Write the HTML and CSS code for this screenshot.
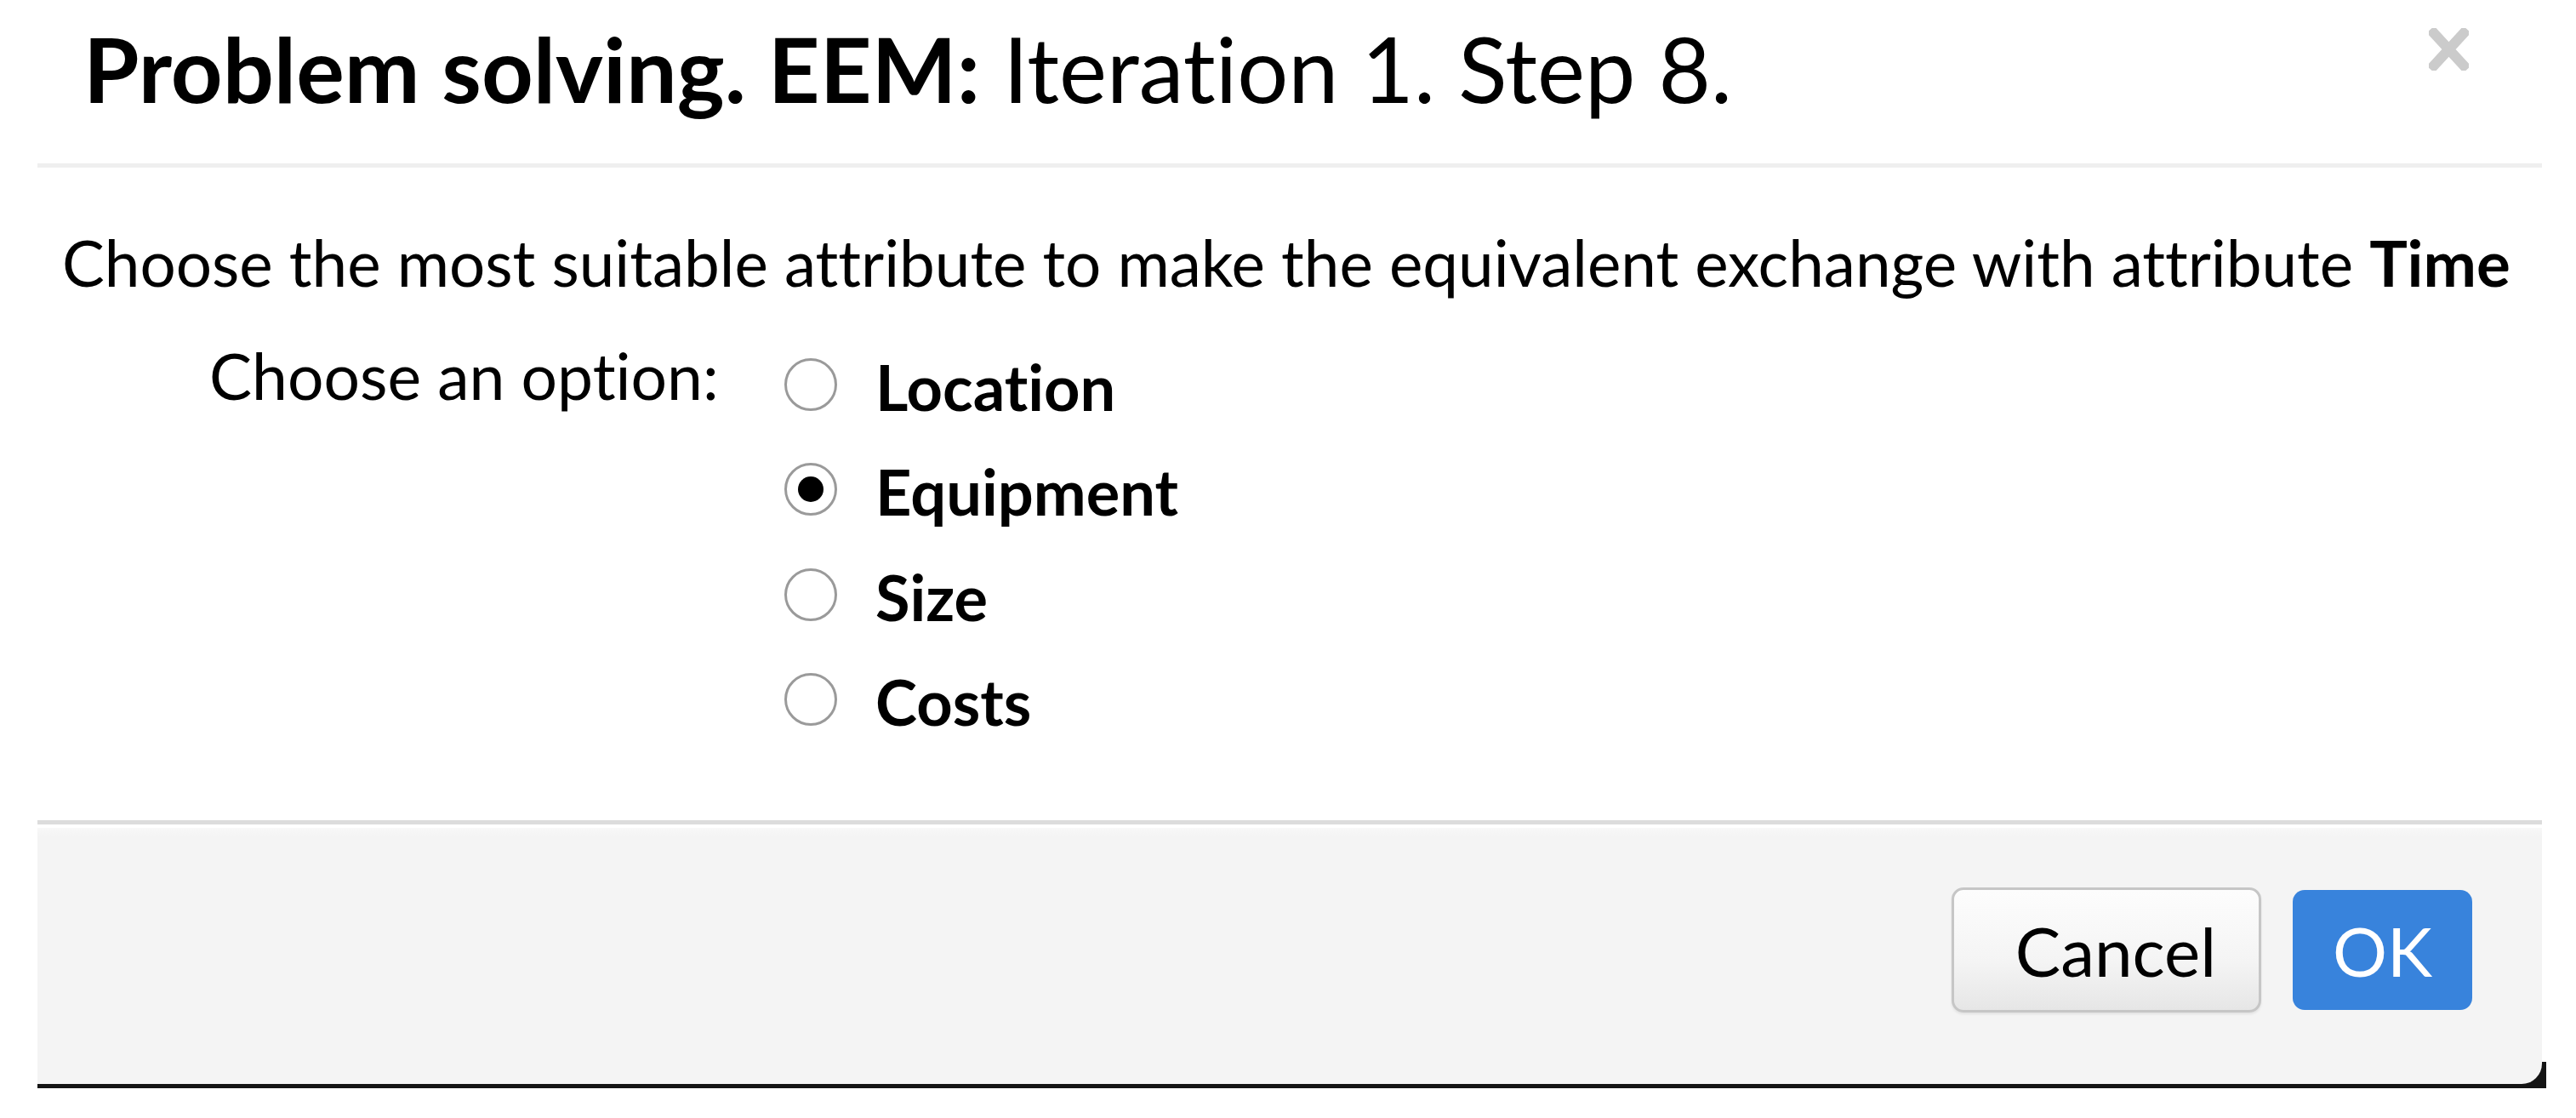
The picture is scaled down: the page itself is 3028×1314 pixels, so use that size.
FILE: index.html
```html
<!DOCTYPE html>
<html lang="en">
<head>
<meta charset="utf-8">
<title>Problem solving. EEM</title>
<link rel="stylesheet" href="styles.css">
</head>
<body>
<div class="modal">
  <div class="modal-header">
    <h1 class="title"><b>Problem solving. EEM:</b> Iteration 1. Step 8.</h1>
    <button class="close" type="button" aria-label="Close">
      <svg width="47" height="50" viewBox="0 0 47 50"><path d="M6 6 L41 44 M41 6 L6 44" stroke="#cbcbcb" stroke-width="12" stroke-linecap="square" fill="none"/></svg>
    </button>
  </div>
  <div class="modal-body">
    <p class="question">Choose the most suitable attribute to make the equivalent exchange with attribute <b>Time</b></p>
    <div class="form-row">
      <div class="form-label">Choose an option:</div>
      <div class="options">
        <label class="option"><span class="radio"></span><span class="opt-text">Location</span></label>
        <label class="option"><span class="radio checked"></span><span class="opt-text">Equipment</span></label>
        <label class="option"><span class="radio"></span><span class="opt-text">Size</span></label>
        <label class="option"><span class="radio"></span><span class="opt-text">Costs</span></label>
      </div>
    </div>
  </div>
  <div class="footer-wrap">
    <div class="modal-footer">
      <button class="btn btn-cancel" type="button">Cancel</button>
      <button class="btn btn-ok" type="button">OK</button>
    </div>
  </div>
</div>
</body>
</html>
```

FILE: styles.css
```css
html, body {
  margin: 0;
  padding: 0;
  background: #ffffff;
}
body {
  font-family: Lato, "Open Sans", "Liberation Sans", sans-serif;
  font-variant-ligatures: none;
  color: #000;
}
.modal {
  margin-left: 44px;
  width: 2944px;
}
.modal-header {
  height: 192px;
  border-bottom: 5px solid #efefef;
  display: flex;
  justify-content: space-between;
  align-items: flex-start;
  padding-left: 54px;
  box-sizing: content-box;
}
.title {
  margin: 0;
  padding-top: 16px;
  font-size: 106px;
  line-height: 128px;
  font-weight: 400;
  white-space: nowrap;
}
.title b {
  font-weight: 700;
}
.close {
  margin: 33px 86px 0 0;
  padding: 0;
  border: 0;
  background: none;
  width: 47px;
  height: 50px;
  display: block;
}
.close svg {
  display: block;
}
.modal-body {
  padding: 66px 0 0 29px;
  height: 767px;
  box-sizing: border-box;
}
.question {
  margin: 0;
  font-size: 74.6px;
  line-height: 90px;
  white-space: nowrap;
}
.question b {
  font-weight: 700;
}
.form-row {
  display: flex;
  align-items: flex-start;
  margin-top: 37px;
}
.form-label {
  width: 849px;
  padding-left: 173px;
  box-sizing: border-box;
  font-size: 75px;
  line-height: 102px;
  white-space: nowrap;
}
.options {
  display: flex;
  flex-direction: column;
}
.option {
  display: flex;
  align-items: center;
  height: 123.5px;
  gap: 45px;
}
.radio {
  width: 62px;
  height: 62px;
  box-sizing: border-box;
  border: 3px solid #9a9a9a;
  border-radius: 50%;
  background: #fff;
  display: flex;
  align-items: center;
  justify-content: center;
  flex: none;
}
.radio.checked::after {
  content: "";
  width: 30px;
  height: 30px;
  border-radius: 50%;
  background: #000;
}
.opt-text {
  font-size: 74px;
  font-weight: 700;
  line-height: 88px;
  margin-top: 6px;
}
.footer-wrap {
  padding: 0 5px 5px 0;
  margin-right: -5px;
  background: linear-gradient(to bottom, transparent calc(100% - 31px), #141414 calc(100% - 31px));
}
.modal-footer {
  border-top: 5px solid #dcdcdc;
  background: linear-gradient(to bottom, #ffffff 0, #ffffff 4px, #f8f8f8 4px, #f4f4f4 14px, #f4f4f4 100%);
  border-bottom-right-radius: 24px;
  height: 305px;
  box-sizing: content-box;
  display: flex;
  justify-content: flex-end;
  align-items: center;
  gap: 37px;
  padding-right: 82px;
}
.btn {
  font-family: Lato, "Open Sans", "Liberation Sans", sans-serif;
  font-size: 80px;
  line-height: 1;
  margin: 0 0 10px 0;
  cursor: pointer;
}
.btn-cancel {
  width: 364px;
  height: 147px;
  border: 3px solid #c6c6c6;
  border-radius: 14px;
  background: linear-gradient(to bottom, #fdfdfd 0%, #f4f4f4 60%, #e6e6e6 100%);
  color: #000;
  padding: 0 0 0 22px;
  box-shadow: 0 2px 3px rgba(0,0,0,0.08);
}
.btn-ok {
  width: 211px;
  height: 141px;
  border: 0;
  border-radius: 14px;
  background: #3883dc;
  color: #fff;
  padding: 0;
}
```
